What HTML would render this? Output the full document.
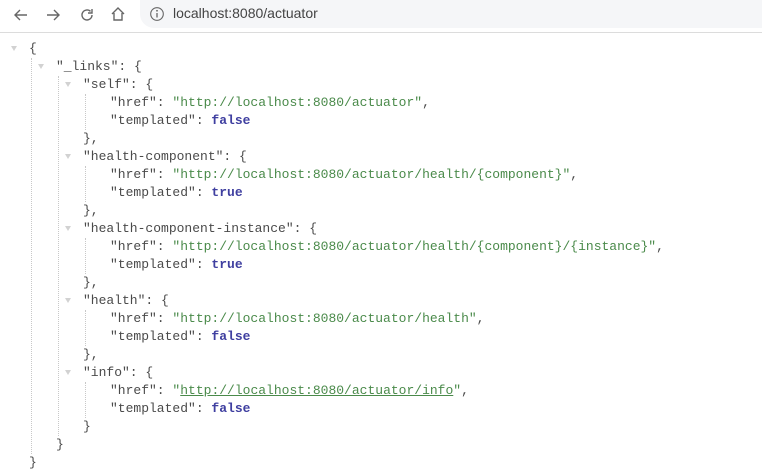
<!DOCTYPE html>
<html><head><style>
*{margin:0;padding:0;box-sizing:border-box}
body{width:762px;height:470px;overflow:hidden;background:#fff;position:relative;font-family:"Liberation Mono",monospace;font-size:13px;color:#4a4a4a}
.bar{position:absolute;left:0;top:0;width:762px;height:33px;background:#fff;border-bottom:1px solid #dcdcdc}
.url{position:absolute;left:140px;top:0;right:-20px;height:28px;background:#f5f6f8;border-radius:0 0 0 14px}
.url span{position:absolute;left:33px;top:5px;font:14px "Liberation Sans",sans-serif;color:#444}
svg.i{position:absolute}
.l{position:absolute;height:18px;line-height:18px;white-space:pre}
.s{color:#4a8a4a}
.b{color:#3f3fa0;font-weight:bold}
.t{position:absolute;width:0;height:0;border-left:3.5px solid transparent;border-right:3.5px solid transparent;border-top:5px solid #d2d2d2}
.g{position:absolute;width:0;border-left:1px dotted #c8c8c8}
.u{text-decoration:underline}
</style></head><body>
<div class="bar">
<svg class="i" style="left:12px;top:6px" width="18" height="18" viewBox="0 0 18 18"><path d="M15 9H3M8 4L3 9l5 5" fill="none" stroke="#666" stroke-width="1.4"/></svg>
<svg class="i" style="left:44px;top:6px" width="18" height="18" viewBox="0 0 18 18"><path d="M3 9h12M10 4l5 5-5 5" fill="none" stroke="#666" stroke-width="1.4"/></svg>
<svg class="i" style="left:78px;top:6px" width="18" height="18" viewBox="0 0 18 18"><path d="M14 9a5 5 0 1 1-1.5-3.6" fill="none" stroke="#666" stroke-width="1.4"/><path d="M14 3v4h-4" fill="none" stroke="#666" stroke-width="1.4"/></svg>
<svg class="i" style="left:109px;top:5px" width="18" height="18" viewBox="0 0 18 18"><path d="M3 9L9 3l6 6M5 8v7h8V8" fill="none" stroke="#666" stroke-width="1.4"/></svg>
<div class="url">
<svg class="i" style="left:9px;top:6px" width="16" height="16" viewBox="0 0 16 16"><circle cx="8" cy="8" r="6.3" fill="none" stroke="#666" stroke-width="1.1"/><path d="M8 7v4.5" stroke="#666" stroke-width="1.3"/><circle cx="8" cy="4.8" r=".9" fill="#666"/></svg>
<span>localhost:8080/actuator</span></div>
</div>

<div class="g" style="left:31px;top:58px;height:396px"></div>
<div class="g" style="left:58px;top:76px;height:360px"></div>
<div class="g" style="left:85px;top:94px;height:36px"></div>
<div class="g" style="left:85px;top:166px;height:36px"></div>
<div class="g" style="left:85px;top:238px;height:36px"></div>
<div class="g" style="left:85px;top:310px;height:36px"></div>
<div class="g" style="left:85px;top:382px;height:36px"></div>

<div class="t" style="left:11px;top:46px"></div>
<div class="t" style="left:38px;top:64px"></div>
<div class="t" style="left:65px;top:82px"></div>
<div class="t" style="left:65px;top:154px"></div>
<div class="t" style="left:65px;top:226px"></div>
<div class="t" style="left:65px;top:298px"></div>
<div class="t" style="left:65px;top:370px"></div>

<div class="l" style="left:29px;top:40px">{</div>
<div class="l" style="left:56px;top:58px">"_links": {</div>
<div class="l" style="left:83px;top:76px">"self": {</div>
<div class="l" style="left:110px;top:94px">"href": <span class="s">"http://localhost:8080/actuator"</span>,</div>
<div class="l" style="left:110px;top:112px">"templated": <span class="b">false</span></div>
<div class="l" style="left:83px;top:130px">},</div>
<div class="l" style="left:83px;top:148px">"health-component": {</div>
<div class="l" style="left:110px;top:166px">"href": <span class="s">"http://localhost:8080/actuator/health/{component}"</span>,</div>
<div class="l" style="left:110px;top:184px">"templated": <span class="b">true</span></div>
<div class="l" style="left:83px;top:202px">},</div>
<div class="l" style="left:83px;top:220px">"health-component-instance": {</div>
<div class="l" style="left:110px;top:238px">"href": <span class="s">"http://localhost:8080/actuator/health/{component}/{instance}"</span>,</div>
<div class="l" style="left:110px;top:256px">"templated": <span class="b">true</span></div>
<div class="l" style="left:83px;top:274px">},</div>
<div class="l" style="left:83px;top:292px">"health": {</div>
<div class="l" style="left:110px;top:310px">"href": <span class="s">"http://localhost:8080/actuator/health"</span>,</div>
<div class="l" style="left:110px;top:328px">"templated": <span class="b">false</span></div>
<div class="l" style="left:83px;top:346px">},</div>
<div class="l" style="left:83px;top:364px">"info": {</div>
<div class="l" style="left:110px;top:382px">"href": <span class="s">"<span class="u">http://localhost:8080/actuator/info</span>"</span>,</div>
<div class="l" style="left:110px;top:400px">"templated": <span class="b">false</span></div>
<div class="l" style="left:83px;top:418px">}</div>
<div class="l" style="left:56px;top:436px">}</div>
<div class="l" style="left:29px;top:454px">}</div>
</body></html>
